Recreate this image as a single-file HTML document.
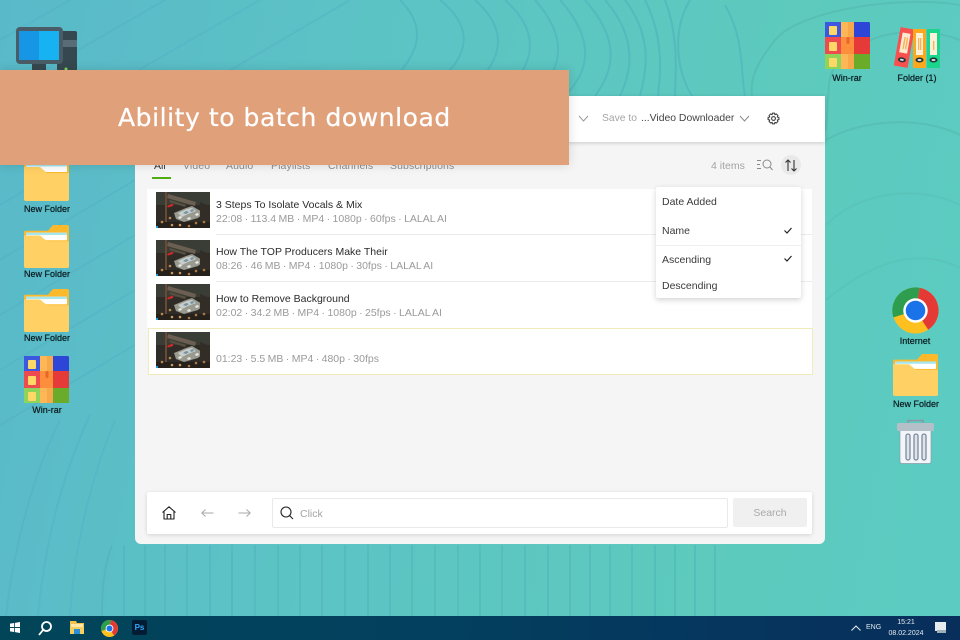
<!DOCTYPE html>
<html><head><meta charset="utf-8">
<style>
html,body{margin:0;padding:0;width:960px;height:640px;overflow:hidden}
body{position:relative;background:linear-gradient(100deg,#5ab9c9 0%,#5cc3c5 35%,#5dcabd 75%,#5ccbc2 100%);font-family:"Liberation Sans",sans-serif}
.a{position:absolute;white-space:nowrap}
.lbl{font-size:9px;color:#0b1d22;text-align:center;width:80px;line-height:11px;text-shadow:0 0 .5px #0b1d22}
.t{font-size:10.5px;color:#2b2b2b;line-height:14px}
.s{font-size:10.5px;color:#9a9a9a;line-height:14px;word-spacing:-.5px}
.tab{font-size:10.5px;color:#8d8d8d;line-height:14px;letter-spacing:.1px}
.m{font-size:10.5px;color:#3a3a3a;line-height:14px}
svg{position:absolute;overflow:visible}
</style></head><body>

<svg style="left:0;top:0" width="960" height="640" fill="none" stroke-width="2">
<g stroke="#4fa9c4" opacity=".3">
<path d="M0 40L70 0M0 95L165 0M0 150L260 0M0 205L350 0M0 260L135 180"/>
<path d="M0 315L135 235M0 370L135 290M0 425L135 345"/>
<path d="M6 616C12 560 30 480 60 420M38 616C44 550 60 480 90 415M70 616C74 550 90 480 115 420"/>
</g>
<g stroke="#4aaab5" opacity=".35">
<path d="M102 616C102 580 106 560 112 545M124 616V545M145 616V545M165 616V545M187 616V545M210 616V545M232 616V545M255 616V545M278 616V545M300 616V545M322 616V545M345 616V545M368 616V545M390 616V545M412 616V545M435 616V545M458 616V545M480 616V545M502 616V545M525 616V545M548 616V545M570 616V545M590 616V545M610 616V545M632 616V545M655 616V545M675 616V545M695 616V545M715 616V545"/>
</g>
<g stroke="#4aaebb" opacity=".5">
<path d="M400 0C440 40 400 70 380 96M440 0C490 40 450 75 420 96M475 0C520 40 490 75 460 96M505 0C550 40 525 75 500 96M535 0C575 45 555 75 535 96M560 0C600 45 585 75 565 96M585 0C625 45 610 75 595 96M605 0C640 40 630 75 620 96M625 0C655 40 645 75 640 96M645 0C665 40 660 75 658 96M665 0C680 40 675 75 675 96M690 0C672 30 676 70 692 96M725 5C745 40 740 70 745 96"/>
</g>
<g stroke="#4fb0a8" opacity=".4">
<path d="M960 5C900 -5 800 10 775 40C755 65 750 80 752 96M960 40C920 25 870 30 840 60C825 75 830 90 826 130M960 135C920 115 860 120 826 140"/>
</g>
<g stroke="#4fb0a8" opacity=".2">
<path d="M960 205C920 185 860 190 826 225M960 268C925 250 880 255 826 300"/>
</g>
</svg>

<!-- Desktop icons defs -->
<svg width="0" height="0" style="position:absolute">
<defs>
<symbol id="folder" viewBox="0 0 45 45">
<path d="M24 6L29 0H43Q45 0 45 2V16H24Z" fill="#fdb92c"/>
<rect x="0" y="6" width="45" height="14" rx="1.500" fill="#fdb92c"/>
<rect x="2" y="8" width="41" height="8" fill="#fff"/>
<rect x="2" y="8" width="41" height="2.500" fill="#a6e6ef"/>
<path d="M0 11H16L23 17H45V43Q45 45 43 45H2Q0 45 0 43Z" fill="#ffd064"/>
</symbol>
<symbol id="rar" viewBox="0 0 45 47">
<rect width="45" height="47" rx="1.500" fill="#2e46d8"/>
<rect width="16" height="15" fill="#3c57e0"/>
<rect y="15" width="16" height="17" fill="#ee4b50"/>
<rect y="32" width="16" height="15" fill="#8ed45a"/>
<rect x="29" y="15" width="16" height="17" fill="#e63a38"/>
<rect x="29" y="32" width="16" height="15" fill="#6aab2a"/>
<rect x="16" width="13" height="47" fill="#fdb757"/>
<rect x="23" width="6" height="47" fill="#f5a94a"/>
<rect x="16" y="15" width="13" height="17" fill="#fd8e3c"/>
<rect x="21.500" y="15" width="3" height="7" rx="1.500" fill="#e8662a"/>
<rect x="4" y="4" width="8" height="9" rx="1" fill="#fed866"/>
<rect x="4" y="20" width="8" height="9" rx="1" fill="#fed866"/>
<rect x="4" y="36" width="8" height="9" rx="1" fill="#fed866"/>
</symbol>
</defs>
</svg>

<!-- PC icon -->
<svg style="left:16px;top:27px" width="62" height="46" viewBox="0 0 62 46">
<rect x="41" y="4" width="20" height="42" rx="2" fill="#36484f"/>
<rect x="47" y="13" width="14" height="7" fill="#586d77"/>
<circle cx="50" cy="42" r="1.500" fill="#7ddb5a"/>
<rect x="16" y="36" width="14" height="10" fill="#36484f"/>
<rect width="47" height="37" rx="4" fill="#4a5d66"/>
<rect x="3" y="4" width="20" height="29" fill="#1896e6"/>
<rect x="23" y="4" width="20" height="29" fill="#16b2f2"/>
</svg>

<!-- Left icons -->
<svg style="left:24px;top:156px" width="45" height="45"><use href="#folder" width="45" height="45" preserveAspectRatio="none"/></svg>
<div class="a lbl" style="left:7px;top:204px">New Folder</div>
<svg style="left:24px;top:225px" width="45" height="43" viewBox="0 0 45 45" preserveAspectRatio="none"><use href="#folder" width="45" height="45"/></svg>
<div class="a lbl" style="left:7px;top:269px">New Folder</div>
<svg style="left:24px;top:289px" width="45" height="43" viewBox="0 0 45 45" preserveAspectRatio="none"><use href="#folder" width="45" height="45"/></svg>
<div class="a lbl" style="left:7px;top:333px">New Folder</div>
<svg style="left:24px;top:356px" width="45" height="47"><use href="#rar" width="45" height="47"/></svg>
<div class="a lbl" style="left:7px;top:405px">Win-rar</div>

<!-- Top right icons -->
<svg style="left:825px;top:22px" width="45" height="47"><use href="#rar" width="45" height="47"/></svg>
<div class="a lbl" style="left:807px;top:73px">Win-rar</div>
<svg style="left:894px;top:27px" width="46" height="42" viewBox="0 0 46 42">
<g transform="rotate(10 10 21)"><rect x="3" y="1" width="14" height="39" fill="#f8504e"/><rect x="6" y="6" width="8" height="20" fill="#fdebd0"/><rect x="8.500" y="10" width="1.500" height="12" fill="#f5b45a"/><rect x="11" y="10" width="1.500" height="12" fill="#f5b45a"/><ellipse cx="10" cy="33" rx="4" ry="2.500" fill="#233"/><ellipse cx="10" cy="33" rx="2" ry="1" fill="#dde"/></g>
<rect x="19" y="2" width="13" height="39" fill="#fba81e"/><rect x="22" y="6" width="7" height="22" fill="#fdf0d8"/><rect x="24" y="11" width="1.300" height="12" fill="#f5b45a"/><rect x="26" y="11" width="1.300" height="12" fill="#f5b45a"/><ellipse cx="25.500" cy="33" rx="4" ry="2.500" fill="#233"/><ellipse cx="25.500" cy="33" rx="2" ry="1" fill="#dde"/>
<rect x="33" y="2" width="13" height="39" fill="#19d68c"/><rect x="36" y="6" width="7" height="22" fill="#fdf0d8"/><rect x="39" y="14" width="1.300" height="9" fill="#f5b45a"/><ellipse cx="39.500" cy="33" rx="4" ry="2.500" fill="#233"/><ellipse cx="39.500" cy="33" rx="2" ry="1" fill="#dde"/>
</svg>
<div class="a lbl" style="left:877px;top:73px">Folder (1)</div>

<!-- Right icons -->
<svg style="left:892px;top:287px" width="47" height="47" viewBox="0 0 48 48">
<circle cx="24" cy="24" r="23.500" fill="#fec01e"/>
<path d="M24 24L28.500 .9A23.500 23.500 0 0 0 1.400 31Z" fill="#2f9d4e"/>
<path d="M24 24L28.500 .9A23.500 23.500 0 0 1 37 43.600Z" fill="#e53935"/>
<circle cx="24" cy="24" r="12.500" fill="#fff"/><circle cx="24" cy="24" r="10" fill="#1a73e8"/>
</svg>
<div class="a lbl" style="left:875px;top:336px">Internet</div>
<svg style="left:893px;top:354px" width="45" height="42" viewBox="0 0 45 45" preserveAspectRatio="none"><use href="#folder" width="45" height="45"/></svg>
<div class="a lbl" style="left:876px;top:399px">New Folder</div>
<svg style="left:897px;top:419px" width="37" height="45" viewBox="0 0 37 45">
<path d="M11 5V1.500H26V5" fill="none" stroke="#8a98a5" stroke-width="1.500"/>
<path d="M3 11H34V42Q34 44.500 32 44.500H5Q3 44.500 3 42Z" fill="#f3f6f9" stroke="#8f9ba8" stroke-width=".7"/>
<rect x="0" y="4" width="37" height="8" rx="1.500" fill="#b5bfc8"/>
<rect x="9" y="15" width="4" height="26" rx="2" fill="#dfe4ea" stroke="#7d8b9f" stroke-width="1.300"/>
<rect x="17" y="15" width="4" height="26" rx="2" fill="#dfe4ea" stroke="#7d8b9f" stroke-width="1.300"/>
<rect x="25" y="15" width="4" height="26" rx="2" fill="#dfe4ea" stroke="#7d8b9f" stroke-width="1.300"/>
</svg>

<!-- App window -->
<div class="a" style="left:135px;top:96px;width:690px;height:448px;background:#f5f5f5;border-radius:0 0 6px 6px"></div>
<div class="a" style="left:135px;top:96px;width:690px;height:46px;background:#fff;box-shadow:0 1px 4px rgba(0,0,0,.18)"></div>

<svg style="left:578px;top:115px" width="11" height="7" fill="none" stroke="#9a9a9a"><path d="M1 1L5.500 6 10 1"/></svg>
<div class="a" style="left:602px;top:112px;font-size:10.3px;line-height:14px;color:#a5a5a5">Save to</div>
<div class="a" style="left:641px;top:112px;font-size:10.4px;line-height:14px;color:#444">...Video Downloader</div>
<svg style="left:739px;top:115px" width="11" height="7" fill="none" stroke="#8a8a8a"><path d="M1 1L5.500 6 10 1"/></svg>
<svg style="left:767px;top:112px" width="13" height="13" viewBox="0 0 24 24" fill="none" stroke="#333" stroke-width="1.900"><circle cx="12" cy="12" r="3.500"/><path d="M10 2H14L14.600 5 17.300 3.600 20.200 6.600 18.900 9.300 22 10V14L18.900 14.700 20.200 17.400 17.300 20.400 14.600 19 14 22H10L9.400 19 6.700 20.400 3.800 17.400 5.100 14.700 2 14V10L5.100 9.300 3.800 6.600 6.700 3.600 9.400 5Z" stroke-linejoin="round"/></svg>

<!-- Tabs -->
<div class="a" style="left:154px;top:159px;font-size:10.5px;line-height:14px;color:#333">All</div>
<div class="a tab" style="left:183px;top:159px">Video</div>
<div class="a tab" style="left:226px;top:159px">Audio</div>
<div class="a tab" style="left:271px;top:159px">Playlists</div>
<div class="a tab" style="left:328px;top:159px">Channels</div>
<div class="a tab" style="left:390px;top:159px">Subscriptions</div>
<div class="a" style="left:152px;top:177px;width:19px;height:2px;background:#52ad12"></div>

<div class="a" style="left:711px;top:159px;font-size:10.5px;line-height:14px;color:#a3a3a3">4 items</div>
<svg style="left:756px;top:159px" width="17" height="12" fill="none" stroke="#8a8a8a" stroke-width="1"><path d="M1 1.500H5M1 5.500H4M1 9.500H5"/><circle cx="11" cy="5" r="4"/><path d="M14 8L16.500 11"/></svg>
<div class="a" style="left:781px;top:155px;width:20px;height:20px;border-radius:50%;background:#e9e9e9"></div>
<svg style="left:785px;top:159px" width="12" height="13" fill="none" stroke="#333" stroke-width="1.100"><path d="M3 12V1M.5 3.500L3 1 5.500 3.500M9 1V12M6.500 9.500L9 12 11.500 9.500"/></svg>

<!-- List -->
<div class="a" style="left:147px;top:189px;width:665px;height:139px;background:#fff"></div>
<div class="a" style="left:216px;top:234px;width:596px;height:1px;background:#ececec"></div>
<div class="a" style="left:216px;top:281px;width:596px;height:1px;background:#ececec"></div>
<div class="a" style="left:148px;top:328px;width:663px;height:45px;background:#fff;border:1px solid #f1ebba"></div>

<svg width="0" height="0" style="position:absolute"><defs>
<symbol id="th" viewBox="0 0 54 36">
<rect width="54" height="36" fill="#2f2c28"/>
<rect x="0" y="0" width="54" height="13" fill="#3a3c36"/>
<path d="M12 2L40 10 39 14 11 6Z" fill="#6a5f50"/>
<path d="M14 8L30 13 29 15 13 10Z" fill="#57503f"/>
<rect x="9" y="0" width="2" height="36" fill="#6a4a35"/>
<path d="M11 14L17 11.500 17 14 12 15.500Z" fill="#d92626"/>
<path d="M18 21L30 16 36 14 48 21 42 26 28 30 20 27Z" fill="#9a9b90"/>
<path d="M22 21L31 17 36 16 40 19 32 22 26 25Z" fill="#c9cdc8"/>
<path d="M27 21L30 19 33 20 30 22ZM34 18L37 17 38 19 35 20Z" fill="#6d93a8"/>
<path d="M22 25L25 24 26 26 23 27ZM31 26L34 25 35 27 32 28ZM39 22L42 21 43 23 40 24Z" fill="#e8e8e0"/>
<path d="M44 10L54 14V36H44Z" fill="#332d27"/>
<rect x="0" y="30" width="54" height="6" fill="#27211c"/>
<circle cx="6" cy="30" r="1.300" fill="#b98a50"/><circle cx="14" cy="26" r="1.300" fill="#b98a50"/><circle cx="16" cy="33" r="1.300" fill="#c99a5a"/><circle cx="24" cy="33" r="1.300" fill="#c99a5a"/><circle cx="33" cy="34" r="1.300" fill="#a9794a"/><circle cx="40" cy="31" r="1.300" fill="#a9794a"/><circle cx="48" cy="30" r="1.300" fill="#a9794a"/>
<rect x="0" y="34" width="2" height="2" fill="#1fa0e0"/>
</symbol>
</defs></svg>
<svg style="left:156px;top:192px" width="54" height="36"><use href="#th" width="54" height="36"/></svg>
<svg style="left:156px;top:240px" width="54" height="36"><use href="#th" width="54" height="36"/></svg>
<svg style="left:156px;top:284px" width="54" height="36"><use href="#th" width="54" height="36"/></svg>
<svg style="left:156px;top:332px" width="54" height="36"><use href="#th" width="54" height="36"/></svg>

<div class="a t" style="left:216px;top:198px">3 Steps To Isolate Vocals &amp; Mix</div>
<div class="a s" style="left:216px;top:212px">22:08 · 113.4 MB · MP4 · 1080p · 60fps · LALAL AI</div>
<div class="a t" style="left:216px;top:245px">How The TOP Producers Make Their</div>
<div class="a s" style="left:216px;top:259px">08:26 · 46 MB · MP4 · 1080p · 30fps · LALAL AI</div>
<div class="a t" style="left:216px;top:292px">How to Remove Background</div>
<div class="a s" style="left:216px;top:306px">02:02 · 34.2 MB · MP4 · 1080p · 25fps · LALAL AI</div>
<div class="a s" style="left:216px;top:352px">01:23 · 5.5 MB · MP4 · 480p · 30fps</div>

<!-- Dropdown -->
<div class="a" style="left:656px;top:187px;width:145px;height:111px;background:#fff;border-radius:2px;box-shadow:0 2px 6px rgba(0,0,0,.18)"></div>
<div class="a" style="left:656px;top:245px;width:145px;height:1px;background:#efefef"></div>
<div class="a m" style="left:662px;top:195px">Date Added</div>
<div class="a m" style="left:662px;top:224px">Name</div>
<div class="a m" style="left:662px;top:253px">Ascending</div>
<div class="a m" style="left:662px;top:279px">Descending</div>
<svg style="left:784px;top:227px" width="8" height="7" fill="none" stroke="#222" stroke-width="1.200"><path d="M.5 3.500L3 6 7.500 1"/></svg>
<svg style="left:784px;top:255px" width="8" height="7" fill="none" stroke="#222" stroke-width="1.200"><path d="M.5 3.500L3 6 7.500 1"/></svg>

<!-- Bottom bar -->
<div class="a" style="left:147px;top:492px;width:665px;height:42px;background:#fff;border-radius:2px;box-shadow:0 1px 4px rgba(0,0,0,.14)"></div>
<svg style="left:162px;top:506px" width="14" height="14" fill="none" stroke="#222" stroke-width="1.100" stroke-linejoin="round"><path d="M.5 6.500L7 .8 13.500 6.500M2 5.500V13H12V5.500M5.200 13V8.500H8.800V13"/></svg>
<svg style="left:201px;top:508px" width="13" height="10" fill="none" stroke="#aaa" stroke-width="1"><path d="M12.500 5H.8M4.500 1.500L.8 5 4.500 8.500"/></svg>
<svg style="left:238px;top:508px" width="13" height="10" fill="none" stroke="#aaa" stroke-width="1"><path d="M.5 5H12.200M8.500 1.500L12.200 5 8.500 8.500"/></svg>
<div class="a" style="left:272px;top:498px;width:454px;height:28px;background:#fff;border:1px solid #e9e9e9;border-radius:2px"></div>
<svg style="left:280px;top:506px" width="14" height="14" fill="none" stroke="#222" stroke-width="1.100"><circle cx="6" cy="6" r="5"/><path d="M9.500 9.500L13 13"/></svg>
<div class="a" style="left:300px;top:507px;font-size:10.5px;line-height:14px;color:#a3a3a3">Click</div>
<div class="a" style="left:733px;top:498px;width:74px;height:29px;background:#f0f0f0;border-radius:2px;font-size:10.5px;line-height:31px;text-align:center;color:#a9a9a9">Search</div>

<!-- Banner -->
<div class="a" style="left:0;top:70px;width:569px;height:95px;background:#e0a07a;box-shadow:0 0 10px rgba(0,0,0,.14)"></div>
<div class="a" style="left:118px;top:101px;font-family:'DejaVu Sans',sans-serif;font-size:25px;line-height:34px;color:#fff;letter-spacing:.56px;-webkit-text-stroke:.25px #fff">Ability to batch download</div>

<!-- Taskbar -->
<div class="a" style="left:0;top:616px;width:960px;height:24px;background:linear-gradient(90deg,#024558 0%,#03405f 45%,#082e5c 100%)"></div>
<svg style="left:10px;top:622px" width="10" height="11" fill="#fff"><path d="M0 1.600L4.200 1V5H0ZM5 .9L10 0V5H5ZM0 6H4.200V10L0 9.400ZM5 6H10V11L5 10.100Z"/></svg>
<svg style="left:38px;top:621px" width="14" height="15" fill="none" stroke="#fff" stroke-width="1.800"><circle cx="8.500" cy="5.500" r="4.500"/><path d="M5 9L1 14"/></svg>
<svg style="left:70px;top:621px" width="14" height="13"><path d="M0 0H6L7 2H14V13H0Z" fill="#f2c14e"/><rect x="1" y="3" width="12" height="3" fill="#fde9a9"/><rect x="0" y="6" width="14" height="7" fill="#f5cf60"/><rect x="4" y="8" width="6" height="5" fill="#2a8fd6"/></svg>
<svg style="left:101px;top:620px" width="17" height="17" viewBox="0 0 48 48"><circle cx="24" cy="24" r="24" fill="#fec01e"/><path d="M24 24L28.500 .4A24 24 0 0 0 1 31Z" fill="#2f9d4e"/><path d="M24 24L28.500 .4A24 24 0 0 1 37 44Z" fill="#e53935"/><circle cx="24" cy="24" r="11" fill="#fff"/><circle cx="24" cy="24" r="8.500" fill="#1a73e8"/></svg>
<div class="a" style="left:132px;top:620px;width:15px;height:15px;background:#021d33;border-radius:2px;color:#31a8ff;font-size:8px;font-weight:bold;line-height:15px;text-align:center">Ps</div>

<svg style="left:851px;top:625px" width="10" height="6" fill="none" stroke="#e8eef2" stroke-width="1"><path d="M.5 5.500L5 1 9.500 5.500"/></svg>
<div class="a" style="left:866px;top:623px;font-size:7px;line-height:10px;color:#dfe8ee">ENG</div>
<div class="a" style="left:888px;top:617px;width:36px;text-align:center;font-size:7px;line-height:11px;color:#e6edf2">15:21<br>08.02.2024</div>
<svg style="left:935px;top:622px" width="11" height="11"><rect width="11" height="9" fill="#e6ebee"/><rect x="2" y="8" width="9" height="3" fill="#9fb0ba"/></svg>

</body></html>
